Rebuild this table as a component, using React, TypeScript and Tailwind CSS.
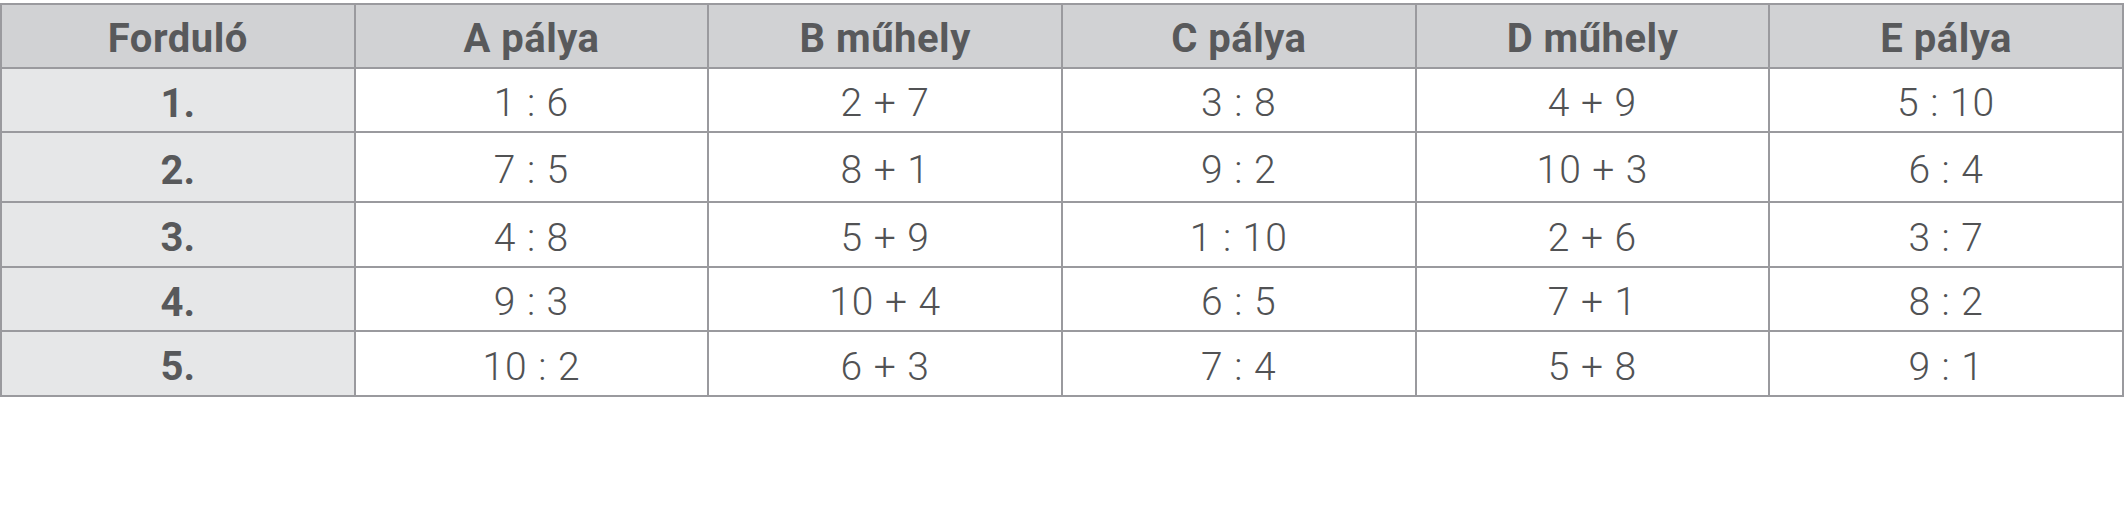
import React from "react";

const headers = ["Forduló", "A pálya", "B műhely", "C pálya", "D műhely", "E pálya"];
const rows: string[][] = [
  ["1.", "1 : 6", "2 + 7", "3 : 8", "4 + 9", "5 : 10"],
  ["2.", "7 : 5", "8 + 1", "9 : 2", "10 + 3", "6 : 4"],
  ["3.", "4 : 8", "5 + 9", "1 : 10", "2 + 6", "3 : 7"],
  ["4.", "9 : 3", "10 + 4", "6 : 5", "7 + 1", "8 : 2"],
  ["5.", "10 : 2", "6 + 3", "7 : 4", "5 + 8", "9 : 1"],
];

const rowHeights = ["h-[64px]", "h-[70px]", "h-[65px]", "h-[64px]", "h-[65px]"];

export default function App() {
  return (
    <div className="w-[2126px] h-[514px] bg-white pt-[3px]" style={{ fontFamily: "Roboto, 'Noto Sans', sans-serif" }}>
      <div className="w-[2124px] grid grid-cols-6 border-l-2 border-t-2 border-[#9a9a9e] text-[#58595b]">
        {headers.map((h) => (
          <div
            key={h}
            className="h-[64px] border-r-2 border-b-2 border-[#9a9a9e] bg-[#d1d2d4] flex items-center justify-center text-[40px] font-bold pt-[6px] tracking-[0.5px]"
          >
            {h}
          </div>
        ))}
        {rows.map((r, ri) =>
          r.map((c, ci) => (
            <div
              key={ri + "-" + ci}
              className={
                rowHeights[ri] +
                " border-r-2 border-b-2 border-[#9a9a9e] flex items-center justify-center pt-[7px] " +
                (ci === 0 ? "bg-[#e6e7e8] font-bold text-[40px]" : "bg-white font-light text-[39px] tracking-[1px] text-[#515254]")
              }
            >
              {c}
            </div>
          ))
        )}
      </div>
    </div>
  );
}
